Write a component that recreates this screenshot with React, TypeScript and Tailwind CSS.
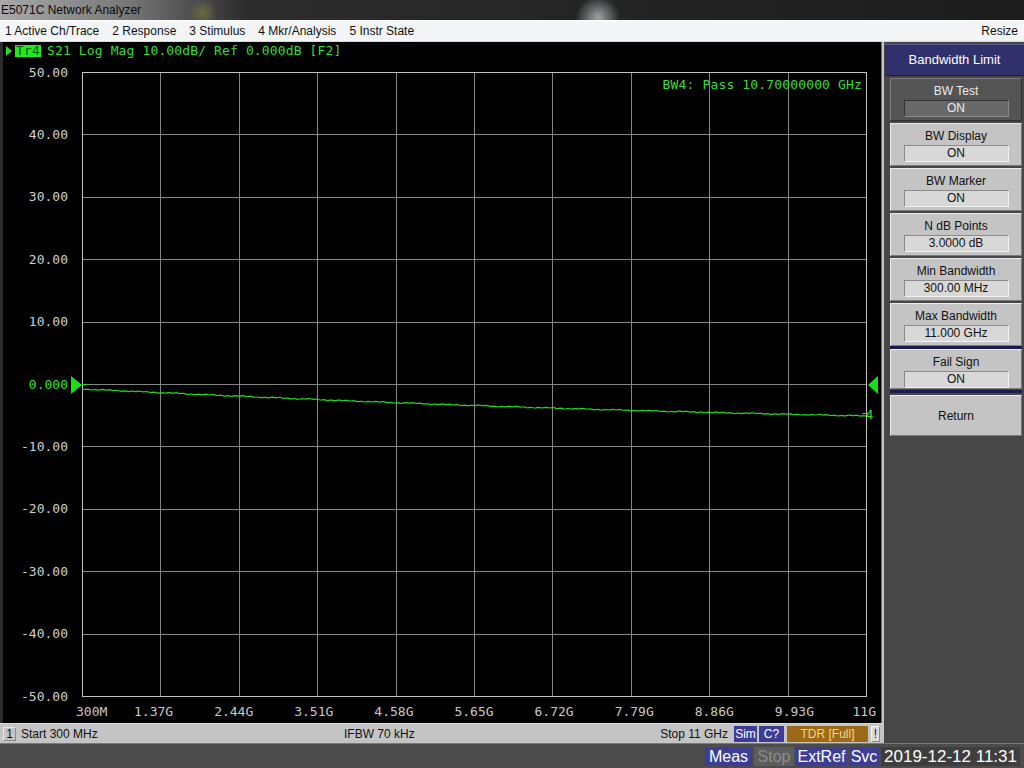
import React from "react";

const yLabels = ["50.00", "40.00", "30.00", "20.00", "10.00", "0.000", "-10.00", "-20.00", "-30.00", "-40.00", "-50.00"];
const xLabels = ["300M", "1.37G", "2.44G", "3.51G", "4.58G", "5.65G", "6.72G", "7.79G", "8.86G", "9.93G", "11G"];

const X0 = 82;
const X1 = 866;
const Y0 = 72;
const Y1 = 696;

function tracePoints() {
  const pts: string[] = [];
  const n = 392;
  for (let i = 0; i <= n; i++) {
    const t = i / n;
    const x = X0 + (X1 - X0) * t;
    const y = 389 + 27 * t + 3 * Math.sin(Math.PI * t) + 0.35 * Math.sin(i * 1.7) + 0.3 * Math.sin(i * 0.37);
    pts.push(`${x.toFixed(1)},${y.toFixed(1)}`);
  }
  return pts.join(" ");
}

function Chart() {
  const vx = Array.from({ length: 9 }, (_, i) => Math.round(X0 + ((X1 - X0) / 10) * (i + 1)) + 0.5);
  const hy = Array.from({ length: 9 }, (_, i) => Math.round(Y0 + ((Y1 - Y0) / 10) * (i + 1)) + 0.5);
  return (
    <svg width={882} height={663} viewBox="0 60 882 663" className="block font-['DejaVu_Sans_Mono',monospace] text-[13px]">
      {vx.map((x) => (
        <line key={x} x1={x} y1={Y0} x2={x} y2={Y1} stroke="#848484" strokeWidth={1} shapeRendering="crispEdges" />
      ))}
      {hy.map((y) => (
        <line key={y} x1={X0} y1={y} x2={X1} y2={y} stroke="#848484" strokeWidth={1} shapeRendering="crispEdges" />
      ))}
      <rect x={X0 + 0.5} y={Y0 + 0.5} width={X1 - X0} height={Y1 - Y0} fill="none" stroke="#c4c4c4" strokeWidth={1} shapeRendering="crispEdges" />

      {yLabels.map((l, i) => (
        <text key={l} x={68} y={Y0 + ((Y1 - Y0) / 10) * i + 4.5} textAnchor="end" fill={i === 5 ? "#2ee02e" : "#cfcfcf"}>
          {l}
        </text>
      ))}
      {xLabels.map((l, i) => {
        if (i === 0) return <text key={l} x={76} y={716} fill="#c8c8c8">{l}</text>;
        if (i === 10) return <text key={l} x={876} y={716} textAnchor="end" fill="#c8c8c8">{l}</text>;
        return (
          <text key={l} x={73.5 + 80.1 * i} y={716} textAnchor="middle" fill="#c8c8c8">
            {l}
          </text>
        );
      })}

      <text x={862} y={89} textAnchor="end" fill="#36dc36" letterSpacing={0.15}>
        BW4: Pass 10.70000000 GHz
      </text>

      <polyline points={tracePoints()} fill="none" stroke="#22d822" strokeWidth={1.2} />
      <line x1={82} y1={384.5} x2={88} y2={384.5} stroke="#22d822" strokeWidth={1} />
      <polygon points="71,376 71,394 82,385" fill="#17e017" />
      <polygon points="878,376 878,394 868,385" fill="#17e017" />
      <line x1={862} y1={413.5} x2={868} y2={413.5} stroke="#22d822" strokeWidth={1} />
      <text x={866} y={419} fill="#2ee02e" className="text-[12px]">
        4
      </text>
    </svg>
  );
}

function SoftKey({ label, value, active, tall = 43 }: { label: string; value: string; active?: boolean; tall?: number }) {
  const base = tall === 43 ? "h-[43px]" : "h-[40px]";
  return (
    <div
      className={
        active
          ? `${base} flex flex-col items-center pt-[4px] bg-[#545454] border-t border-l border-[#7c7c7c] border-b border-r border-b-[#2e2e2e] border-r-[#2e2e2e]`
          : `${base} flex flex-col items-center pt-[4px] bg-[#c4c4c4] border-t border-l border-[#ececec] border-b border-r border-b-[#7a7a7a] border-r-[#7a7a7a]`
      }
    >
      <div className={active ? "h-[16px] leading-[16px] text-[#ececec]" : "h-[16px] leading-[16px] text-[#111]"}>{label}</div>
      <div
        className={
          active
            ? "mt-[1px] w-[105px] h-[17px] leading-[15px] text-center bg-[#686868] text-[#ececec] border-t border-l border-[#333] border-b border-r border-b-[#8a8a8a] border-r-[#8a8a8a]"
            : "mt-[1px] w-[105px] h-[17px] leading-[15px] text-center bg-[#d8d8d8] text-[#111] border-t border-l border-[#8a8a8a] border-b border-r border-b-[#f2f2f2] border-r-[#f2f2f2]"
        }
      >
        {value}
      </div>
    </div>
  );
}

export default function App() {
  return (
    <div className="w-[1024px] h-[768px] flex flex-col overflow-hidden bg-[#4a4a4a] font-['Liberation_Sans',Arial,sans-serif] text-[12px]">
      {/* window title */}
      <div className="h-[20px] flex items-center text-[12px] text-[#0c0c0c] bg-[radial-gradient(circle_at_203px_13px,#6e6a3e_0,transparent_14px),radial-gradient(circle_at_598px_18px,#9ea4a4_0,transparent_22px),linear-gradient(90deg,#a8a8a8_0,#7a7a7a_12%,#2c2c2c_24%,#1c1c1c_100%)]">
        <span className="pl-[1px]">E5071C Network Analyzer</span>
      </div>

      {/* menu bar */}
      <div className="h-[22px] flex items-center bg-[#f4f5f6] border-t border-[#fdfdfd] border-b border-b-[#d8d8d8] text-[12px] text-[#111]">
        <div className="flex items-center pl-[5px] gap-[13px]">
          <span>1 Active Ch/Trace</span>
          <span>2 Response</span>
          <span>3 Stimulus</span>
          <span>4 Mkr/Analysis</span>
          <span>5 Instr State</span>
        </div>
        <span className="ml-auto pr-[6px]">Resize</span>
      </div>

      <div className="flex h-[701px]">
        {/* left: trace window + status */}
        <div className="w-[882px] flex flex-col">
          <div className="h-[681px] bg-black border-r border-[#6c6c6c] shadow-[inset_3px_0_0_#2c2c2c] flex flex-col">
            <div className="h-[18px] flex items-center pl-[6px] font-['DejaVu_Sans_Mono',monospace] text-[13px] tracking-[0.13px] text-[#36dc36]">
              <span className="w-0 h-0 border-y-[5px] border-y-transparent border-l-[6px] border-l-[#1fe01f]" />
              <span className="ml-[3px] w-[26px] h-[12px] leading-[12px] text-center bg-[#22e822] text-[#0a5a0a]">Tr4</span>
              <span className="ml-[6px] leading-[14px]">S21 Log Mag 10.00dB/ Ref 0.000dB [F2]</span>
            </div>
            <Chart />
          </div>
          <div className="h-[20px] flex items-center bg-[#c4c4c4] border-t border-[#d8d8d8] text-[12px] text-[#111]">
            <span className="ml-[3px] w-[13px] h-[14px] leading-[12px] text-center border border-[#e8e8e8] border-r-[#8a8a8a] border-b-[#8a8a8a]">1</span>
            <span className="ml-[5px] w-[323px]">Start 300 MHz</span>
            <span>IFBW 70 kHz</span>
            <span className="ml-auto">Stop 11 GHz</span>
            <span className="ml-[6px] w-[23px] h-[16px] leading-[16px] text-center bg-[#3d3d96] text-white">Sim</span>
            <span className="ml-[2px] w-[25px] h-[16px] leading-[16px] text-center bg-[#3d3d96] text-white">C?</span>
            <span className="ml-[3px] w-[81px] h-[16px] leading-[16px] text-center bg-[#9c6a16] text-[#f4d890]">TDR [Full]</span>
            <span className="ml-[3px] mr-[2px] w-[9px] h-[16px] leading-[14px] text-center bg-[#dcdcdc] border border-[#f4f4f4] border-r-[#8a8a8a] border-b-[#8a8a8a]">!</span>
          </div>
        </div>

        {/* right: softkey panel */}
        <div className="w-[142px] bg-[#474747] border-l-2 border-[#c6c6c6] flex flex-col pt-[2px] text-[12px]">
          <div className="ml-[1px] h-[32px] flex items-center justify-center bg-[#30306c] border-t border-[#5a5a90] border-b border-b-[#1c1c40] text-white text-[13px]">
            Bandwidth Limit
          </div>
          <div className="ml-[6px] mr-[2px] mt-[2px] flex flex-col gap-[2px]">
            <SoftKey label="BW Test" value="ON" active />
            <SoftKey label="BW Display" value="ON" />
            <SoftKey label="BW Marker" value="ON" />
            <SoftKey label="N dB Points" value="3.0000 dB" />
            <SoftKey label="Min Bandwidth" value="300.00 MHz" />
            <SoftKey label="Max Bandwidth" value="11.000 GHz" />
          </div>
          <div className="ml-[6px] mr-[2px] h-[3px] bg-[#1a1a4e]" />
          <div className="ml-[6px] mr-[2px]">
            <SoftKey label="Fail Sign" value="ON" tall={40} />
          </div>
          <div className="ml-[6px] mr-[2px] mt-[1px] h-[3px] bg-[#1a1a4e]" />
          <div className="ml-[6px] mr-[2px] mt-[2px] h-[41px] flex items-center justify-center bg-[#c4c4c4] border-t border-l border-[#ececec] border-b border-r border-b-[#7a7a7a] border-r-[#7a7a7a] text-[#111]">
            Return
          </div>
        </div>
      </div>

      {/* bottom status bar */}
      <div className="h-[25px] flex items-center justify-end gap-[2px] pr-[4px] bg-[#4c4c4c] border-t border-[#7a7a7a] text-[16px]">
        <span className="w-[47px] h-[19px] leading-[19px] text-center bg-[#3d3d96] text-white">Meas</span>
        <span className="w-[40px] h-[19px] leading-[19px] text-center bg-[#5c5c5c] text-[#8c8c8c]">Stop</span>
        <span className="w-[51px] h-[19px] leading-[19px] text-center bg-[#3d3d96] text-white">ExtRef</span>
        <span className="w-[30px] h-[19px] leading-[19px] text-center bg-[#3d3d96] text-white">Svc</span>
        <span className="w-[139px] h-[19px] leading-[19px] text-center bg-[#3e3e3e] text-white text-[17px]">2019-12-12 11:31</span>
      </div>
    </div>
  );
}
